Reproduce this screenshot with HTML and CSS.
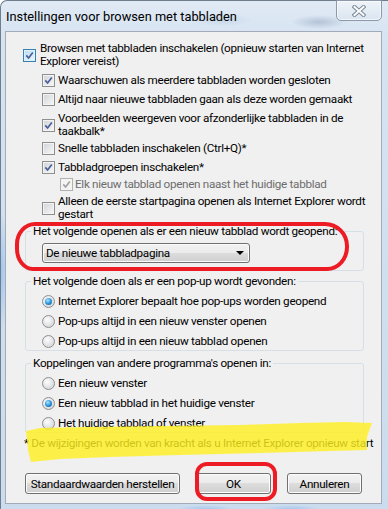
FILE: index.html
```html
<!DOCTYPE html>
<html lang="nl">
<head>
    <meta charset="UTF-8">
    <title>Instellingen voor browsen met tabbladen</title>
    <link rel="stylesheet" href="styles.css">
</head>
<body>
<div class="window">
    <!-- Title bar -->
    <div class="titlebar">
        <span class="title">Instellingen voor browsen met tabbladen</span>
        <div class="close-btn">
            <svg width="14" height="12" viewBox="0 0 14 12">
                <path d="M2.5 2 L11.5 10 M11.5 2 L2.5 10" stroke="#7c8898" stroke-width="4" stroke-linecap="square"/>
                <path d="M2.5 2 L11.5 10 M11.5 2 L2.5 10" stroke="#fbfcfd" stroke-width="2" stroke-linecap="square"/>
            </svg>
        </div>
    </div>

    <div class="client">
        <div class="options">
            <div class="opt">
                <span class="cb hot"><svg viewBox="0 0 9 9"><path d="M1.3 4.4 L3.6 7 L7.8 1.4"/></svg></span>
                <span>Browsen met tabbladen inschakelen (opnieuw starten van Internet<br>Explorer vereist)</span>
            </div>
            <div class="opt lvl1">
                <span class="cb"><svg viewBox="0 0 9 9"><path d="M1.3 4.4 L3.6 7 L7.8 1.4"/></svg></span>
                <span>Waarschuwen als meerdere tabbladen worden gesloten</span>
            </div>
            <div class="opt lvl1">
                <span class="cb"></span>
                <span>Altijd naar nieuwe tabbladen gaan als deze worden gemaakt</span>
            </div>
            <div class="opt lvl1">
                <span class="cb"><svg viewBox="0 0 9 9"><path d="M1.3 4.4 L3.6 7 L7.8 1.4"/></svg></span>
                <span>Voorbeelden weergeven voor afzonderlijke tabbladen in de<br>taakbalk*</span>
            </div>
            <div class="opt lvl1 tight">
                <span class="cb"></span>
                <span>Snelle tabbladen inschakelen (Ctrl+Q)*</span>
            </div>
            <div class="opt lvl1">
                <span class="cb"><svg viewBox="0 0 9 9"><path d="M1.3 4.4 L3.6 7 L7.8 1.4"/></svg></span>
                <span>Tabbladgroepen inschakelen*</span>
            </div>
            <div class="opt lvl2 tight disabled">
                <span class="cb"><svg viewBox="0 0 9 9"><path d="M1.3 4.4 L3.6 7 L7.8 1.4"/></svg></span>
                <span>Elk nieuw tabblad openen naast het huidige tabblad</span>
            </div>
            <div class="opt lvl1 tight">
                <span class="cb"></span>
                <span>Alleen de eerste startpagina openen als Internet Explorer wordt<br>gestart</span>
            </div>
        </div>

        <fieldset class="group">
            <legend>Het volgende openen als er een nieuw tabblad wordt geopend:</legend>
            <div class="group-body">
                <div class="combo">
                    <span>De nieuwe tabbladpagina</span>
                    <span class="arrow"></span>
                </div>
            </div>
        </fieldset>

        <fieldset class="group group-radios">
            <legend>Het volgende doen als er een pop-up wordt gevonden:</legend>
            <div class="group-body radios">
                <div class="opt"><span class="rb on"></span><span>Internet Explorer bepaalt hoe pop-ups worden geopend</span></div>
                <div class="opt"><span class="rb"></span><span>Pop-ups altijd in een nieuw venster openen</span></div>
                <div class="opt"><span class="rb"></span><span>Pop-ups altijd in een nieuw tabblad openen</span></div>
            </div>
        </fieldset>

        <fieldset class="group group-radios group-links">
            <legend>Koppelingen van andere programma's openen in:</legend>
            <div class="group-body radios">
                <div class="opt"><span class="rb"></span><span>Een nieuw venster</span></div>
                <div class="opt"><span class="rb on"></span><span>Een nieuw tabblad in het huidige venster</span></div>
                <div class="opt"><span class="rb"></span><span>Het huidige tabblad of venster</span></div>
            </div>
        </fieldset>

        <p class="note">* De wijzigingen worden van kracht als u Internet Explorer opnieuw start</p>

        <div class="buttons">
            <button class="btn btn-wide">Standaardwaarden herstellen</button>
            <button class="btn">OK</button>
            <button class="btn">Annuleren</button>
        </div>
    </div>

    <!-- annotations drawn over the screenshot -->
    <svg class="highlight" width="388" height="509" viewBox="0 0 388 509">
        <path d="M26 431 L40 428 L90 427 L160 426 L240 425 L300 423 L345 422 L372 423 L369 431 L367 437 L367 450 L330 451 L260 453 L180 455 L110 457 L60 459 L31 462 L28 450 L27 440 Z"/>
    </svg>
    <div class="ring ring-group"></div>
    <div class="ring ring-ok"></div>
</div>
</body>
</html>
```

FILE: styles.css
```css
html, body {
    margin: 0;
    width: 388px;
    height: 509px;
    overflow: hidden;
}

* {
    box-sizing: border-box;
}

body {
    font-family: Roboto, "Open Sans", sans-serif;
    font-size: 11.7px;
    letter-spacing: -0.3px;
    color: #000;
}

/* Window frame */
.window {
    position: relative;
    height: 509px;
    border-top: 1px solid #6f7d8d;
    border-left: 1px solid #6f7d8d;
    border-top-left-radius: 7px;
    background:
        radial-gradient(ellipse 28px 7px at 318px 21px, rgba(110, 130, 165, 0.35), transparent),
        radial-gradient(ellipse 30px 7px at 222px 19px, rgba(150, 170, 200, 0.25), transparent),
        radial-gradient(ellipse 8px 60px at 0 270px, rgba(120, 175, 235, 0.55), transparent),
        radial-gradient(ellipse 30px 5px at 205px 509px, rgba(120, 170, 230, 0.5), transparent),
        radial-gradient(ellipse 30px 5px at 290px 509px, rgba(120, 170, 230, 0.5), transparent),
        linear-gradient(#e0eaf5 0, #d6e3f1 40px, #cbdcee 100%);
}

.titlebar {
    display: flex;
    align-items: flex-start;
    height: 30px;
}

.title {
    padding: 9px 0 0 5px;
    font-size: 12.8px;
    letter-spacing: 0;
    line-height: 14px;
    white-space: nowrap;
}

.close-btn {
    margin: -1px 6px 0 auto;
    width: 46px;
    height: 21px;
    display: flex;
    align-items: center;
    justify-content: center;
    border: 1px solid #8c99aa;
    border-radius: 0 0 5px 5px;
    background: linear-gradient(#eef3f8, #dbe5f0);
    box-shadow: inset 0 0 0 1px rgba(255, 255, 255, 0.6);
}

/* Client area */
.client {
    margin: 0 6px 0 4px;
    height: 473px;
    border: 1px solid #a2abb7;
    background: #f0f0f0;
    padding: 10px 17px 0 17px;
}

.options {
    display: flex;
    flex-direction: column;
    gap: 6px;
}

.opt {
    display: flex;
    align-items: center;
    gap: 4px;
    line-height: 13px;
    white-space: nowrap;
}

.lvl1 {
    margin-left: 19px;
    gap: 3px;
}

.lvl2 {
    margin-left: 37px;
    gap: 2px;
}

.tight {
    margin-top: -2px;
}

.disabled {
    color: #6d6d6d;
}

/* Checkbox */
.cb {
    flex: none;
    width: 13px;
    height: 13px;
    display: flex;
    align-items: center;
    justify-content: center;
    border: 1px solid #8e8f8f;
    background: linear-gradient(135deg, #cfd2d7, #f9f9f9);
    box-shadow: inset 0 0 0 1px #f3f3f3;
}

.cb svg {
    width: 9px;
    height: 9px;
}

.cb path {
    fill: none;
    stroke: #4a5f97;
    stroke-width: 1.7;
}

.cb.hot {
    border-color: #3c7fb1;
    background: linear-gradient(135deg, #b9dcf2, #eaf6fd);
    box-shadow: inset 0 0 0 1px #def2fc;
}

.disabled .cb {
    border-color: #b1b1b1;
    background: #f4f4f4;
    box-shadow: none;
}

.disabled .cb path {
    stroke: #a2a2a2;
}

/* Radio */
.rb {
    flex: none;
    width: 13px;
    height: 13px;
    display: flex;
    align-items: center;
    justify-content: center;
    border: 1px solid #8f8f8f;
    border-radius: 50%;
    background: radial-gradient(circle at 40% 35%, #fdfdfd 0, #e6e8eb 45%, #c9cdd3 100%);
}

.rb.on::after {
    content: "";
    width: 7px;
    height: 7px;
    border-radius: 50%;
    background: radial-gradient(circle at 40% 35%, #b2e6ff 0, #2b96dc 50%, #0c4b8c 100%);
}

/* Group boxes */
.group {
    margin: 4px 0 0 2px;
    min-width: 0;
    border: 1px solid #d5dfe5;
    border-radius: 3px;
    padding: 5px 0 7px 5px;
}

.group legend {
    padding: 0 2px;
    line-height: 13px;
    white-space: nowrap;
}

.group-body {
    padding-left: 11px;
}

.radios {
    display: flex;
    flex-direction: column;
    gap: 7px;
}

.group .radios .opt {
    gap: 3px;
}

.group-radios {
    padding-top: 7px;
    padding-bottom: 2px;
}

.group-links {
    margin-top: 6px;
}

/* Combo box */
.combo {
    width: 208px;
    height: 20px;
    display: flex;
    align-items: center;
    justify-content: space-between;
    padding: 0 5px 0 3px;
    border: 1px solid #707070;
    border-radius: 3px;
    background: linear-gradient(#f2f2f2 0, #ebebeb 50%, #dddddd 50%, #cfcfcf 100%);
    box-shadow: inset 0 0 0 1px #fbfbfb;
}

.arrow {
    width: 0;
    height: 0;
    border-left: 4px solid transparent;
    border-right: 4px solid transparent;
    border-top: 4px solid #000;
}

.note {
    margin: 4px 0 0 1px;
    line-height: 13px;
    white-space: nowrap;
}

/* Buttons */
.buttons {
    display: flex;
    gap: 16px;
    margin: 23px 0 0 2px;
}

.btn {
    flex: none;
    width: 75px;
    height: 21px;
    padding: 0;
    font: inherit;
    letter-spacing: inherit;
    color: #000;
    white-space: nowrap;
    border: 1px solid #707070;
    border-radius: 3px;
    background: linear-gradient(#f2f2f2 0, #ebebeb 50%, #dddddd 50%, #cfcfcf 100%);
    box-shadow: inset 0 0 0 1px #fcfcfc;
}

.btn-wide {
    width: 155px;
}

/* Annotations */
.highlight {
    position: absolute;
    left: -1px;
    top: -1px;
    pointer-events: none;
}

.highlight path {
    fill: #fff01e;
    opacity: 0.8;
}

.ring {
    position: absolute;
    border: 4px solid #ed1c24;
    pointer-events: none;
}

.ring-group {
    left: 14px;
    top: 221px;
    width: 334px;
    height: 49px;
    border-radius: 20px 24px 22px 18px / 22px 24px 24px 22px;
}

.ring-ok {
    left: 194px;
    top: 461px;
    width: 82px;
    height: 39px;
    border-radius: 12px;
}
```
